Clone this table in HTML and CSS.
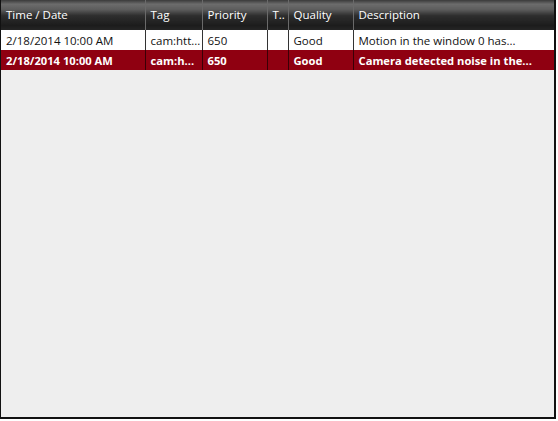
FILE: index.html
```html
<!DOCTYPE html>
<html lang="en">
<head>
  <meta charset="UTF-8">
  <title>Event log</title>
  <link rel="stylesheet" href="styles.css">
</head>
<body>
  <div class="grid">
    <table class="events">
      <colgroup>
        <col class="c-time">
        <col class="c-tag">
        <col class="c-prio">
        <col class="c-type">
        <col class="c-quality">
        <col class="c-desc">
      </colgroup>
      <thead>
        <tr>
          <th>Time / Date</th>
          <th>Tag</th>
          <th>Priority</th>
          <th>T..</th>
          <th>Quality</th>
          <th>Description</th>
        </tr>
      </thead>
      <tbody>
        <tr>
          <td>2/18/2014 10:00 AM</td>
          <td>cam:htt...</td>
          <td>650</td>
          <td></td>
          <td>Good</td>
          <td>Motion in the window 0 has...</td>
        </tr>
        <tr class="selected">
          <td>2/18/2014 10:00 AM</td>
          <td>cam:h...</td>
          <td>650</td>
          <td></td>
          <td>Good</td>
          <td>Camera detected noise in the...</td>
        </tr>
      </tbody>
    </table>
  </div>
</body>
</html>
```

FILE: styles.css
```css
body {
  margin: 0;
  padding: 0;
  background: #fff;
  font-family: 'Open Sans', 'Noto Sans', sans-serif;
  font-size: 11.5px;
}

/* Contenedor de la grilla */
.grid {
  width: 553px;
  height: 417px;
  background: #eeeeee;
  border-left: 1px solid #111;
  border-right: 2px solid #111;
  border-bottom: 2px solid #111;
  overflow: hidden;
}

.events {
  width: 100%;
  border-collapse: collapse;
  table-layout: fixed;
}

.c-time { width: 144px; }
.c-tag { width: 57px; }
.c-prio { width: 65px; }
.c-type { width: 21px; }
.c-quality { width: 65px; }
.c-desc { width: auto; }

.events th {
  height: 29px;
  padding: 0 0 1px 5px;
  text-align: left;
  font-weight: normal;
  color: #fff;
  white-space: nowrap;
  overflow: hidden;
  background: linear-gradient(#3a3a3a 0, #6c6c6c 14%, #5c5c5c 32%, #2e2e2e 52%, #1c1c1c 85%, #252525 100%);
  border-left: 1px solid #6a6a6a;
}

.events th:first-child {
  border-left: none;
}

.events td {
  height: 19px;
  padding: 1px 0 0 5px;
  color: #111;
  background: #fff;
  white-space: nowrap;
  overflow: hidden;
  border-left: 1px solid #333;
}

.events td:first-child {
  border-left: none;
}

.events tr.selected td {
  height: 19px;
  font-size: 11.2px;
  background: #8f0011;
  color: #fff;
  font-weight: bold;
  border-left-color: #3a0006;
}
```
